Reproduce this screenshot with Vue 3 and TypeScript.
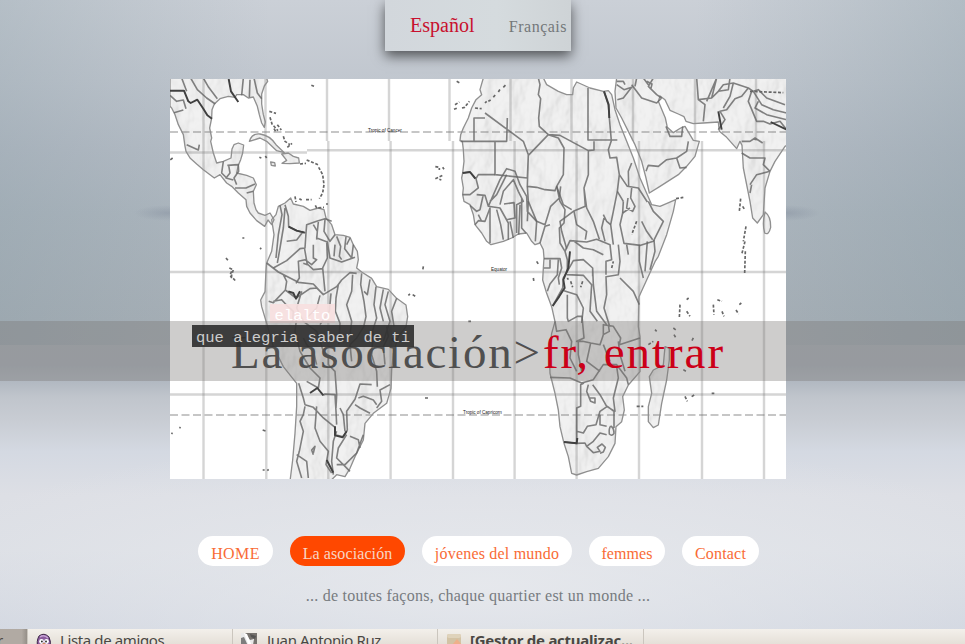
<script setup lang="ts">
interface MenuItem {
  label: string
  size: string
  active?: boolean
}

const menu: MenuItem[] = [
  { label: 'HOME', size: 'home' },
  { label: 'La asociación', size: 'asoc', active: true },
  { label: 'jóvenes del mundo', size: 'jov' },
  { label: 'femmes', size: 'fem' },
  { label: 'Contact', size: 'con' },
]

const north: number[] = [203.5, 265.5, 327, 389, 449.5, 510.5, 571.5, 633, 695, 756]
const south: number[] = [203.5, 266.3, 328.3, 390.6, 453, 514.6, 576.6, 639, 702, 764]

// Coastlines, drawn at three units per pixel, origin at the map's top left.
const land: string[] = [
  'M0 0L290 0L293 10L283 24L275 48L275 78L280 110L286 132L283 148L275 135L268 110L262 85L250 57L235 60L220 50L200 50L195 58L175 55L150 62L133 78L126 95L125 120L119 150L125 180L122 190L130 225L140 255L160 250L183 240L186 213L192 200L205 195L221 201L218 225L212 245L205 262L200 285L230 292L250 300L259 320L250 340L252 375L258 395L265 405L285 412L300 405L312 425L305 440L294 426L284 445L260 428L240 405L230 385L228 365L205 345L185 325L170 315L150 290L133 300L100 275L80 258L60 240L48 220L45 205L40 170L25 140L15 110L5 90L0 85Z',
  'M305 425L318 410L325 385L345 375L362 360L370 378L400 385L420 397L445 390L462 395L468 420L485 440L495 470L520 472L540 478L550 500L562 520L565 545L560 570L575 582L605 601L620 626L655 634L680 661L708 681L713 716L708 746L685 776L670 826L665 876L663 931L650 976L610 1006L585 1036L580 1086L555 1136L540 1171L525 1196L500 1190L480 1210L360 1210L368 1146L375 1066L380 986L380 916L340 866L310 806L290 736L275 686L272 666L285 641L288 576L290 555L305 520L312 470Z',
  'M940 0L930 35L935 50L918 65L905 90L895 120L880 150L872 170L870 188L877 190L880 215L882 250L878 285L875 300L880 330L878 350L882 370L900 380L910 410L915 440L935 465L950 490L963 500L1000 490L1025 480L1045 468L1070 465L1085 490L1095 500L1110 495L1120 515L1122 540L1120 571L1118 606L1130 646L1145 686L1155 731L1145 766L1138 816L1140 886L1155 946L1165 996L1170 1046L1182 1096L1195 1136L1205 1186L1220 1191L1250 1181L1285 1171L1315 1136L1335 1096L1338 1046L1355 1031L1363 996L1358 956L1375 921L1410 881L1410 776L1405 746L1407 656L1430 606L1455 551L1465 535L1490 470L1510 400L1517 365L1470 385L1445 380L1432 350L1410 300L1390 240L1370 190L1350 140L1335 95L1325 50L1315 38L1300 40L1260 30L1220 12L1210 30L1208 50L1190 50L1165 40L1130 20L1120 0Z',
  'M1340 0L1335 40L1338 90L1355 120L1375 160L1395 200L1415 250L1428 300L1438 345L1470 325L1525 290L1550 265L1575 235L1588 190L1570 187L1545 145L1532 150L1510 164L1492 148L1486 120L1465 70L1470 54L1485 65L1500 97L1525 108L1542 116L1548 130L1570 137L1600 135L1645 132L1648 160L1670 178L1700 212L1710 190L1716 202L1720 270L1740 370L1748 420L1762 435L1780 410L1785 330L1800 280L1815 250L1845 205L1855 200L1855 0Z',
  'M1485 806L1498 811L1498 846L1490 906L1475 976L1465 1041L1450 1049L1435 1031L1435 986L1445 946L1438 896L1450 876L1480 861Z',
  'M1785 402Q1803 415 1802 448Q1796 473 1784 465Q1776 438 1785 402Z',
  'M238 190Q246 165 270 168Q300 172 318 200L343 224L320 218L290 190L270 180Z',
  'M335 228L355 225L370 235L386 240L388 255L360 257L336 256L350 247Z',
  'M302 252L314 254L316 264L304 262Z',
]

const borders: string[] = [
  'M62 0L82 35L110 60L136 78M100 0L116 28L142 62M35 0L50 40M220 0L215 52M240 5L238 58M252 0L262 45L275 62M0 52L20 70L40 66L48 92M12 104L40 96M50 200L85 216L88 200M160 250L155 285L170 300M172 262L205 260L206 280L192 300L200 320M195 330L228 330L255 318M230 345L250 340M176 262L180 285L168 300L190 306',
  'M345 380L355 415L356 446L380 458L408 465M330 382L336 410L325 470L318 540M345 390L340 450L330 510L322 555M408 465L405 510L390 512L350 548L310 570M408 465L410 440L440 430L465 422L485 430M445 432L440 480L472 492L480 540L515 552L555 538M465 425L462 460L480 490L495 470M430 500L430 540L440 545L425 560L405 545L385 550L388 600L378 616M403 508L412 560L400 556M470 490L472 540L458 570L465 640M500 475L512 505L508 535L515 545M528 476L524 512L545 540L550 500M540 480L530 500M350 490L380 486L400 460M430 440L442 460L440 485M495 500L492 535M412 558L430 575L460 572',
  'M290 555L325 582L385 613L430 618L460 650L500 626L515 606L540 584L560 586M325 582L340 590L350 610L346 636L310 674L296 670M346 636L378 660L420 632L440 630L460 650M310 670L335 665L350 682L370 700L368 730M505 620L498 660L496 700L510 736L506 800M548 590L545 640L530 680L545 730L540 770M575 586L572 620L582 670L588 716L580 750M600 604L592 650L582 640M618 626L612 680L620 720L604 770M640 634L630 690L640 730M655 640L645 680L660 730L640 790M680 661L665 700L672 745M483 646L478 700L450 740M450 652L440 690L410 720M585 740L560 780L540 800L545 850M610 760L605 830L620 880L622 926M650 745L655 776L640 806L645 860M395 640L380 690L400 730L440 760L460 820L500 850',
  'M380 720L375 760L390 820L420 870L450 900L445 930L410 910M386 916L400 960L405 980L430 988L460 1020L495 1048L495 1070L520 1076L532 1056L530 1000L555 964L570 918L605 920M460 952L465 948L495 950L498 1000L500 1040M400 780L410 800L430 820L440 860M460 830L475 835L475 860L495 880L500 950L498 990M405 985L400 1010L390 1030L400 1060L388 1120L380 1150L395 1200M440 985L435 1050L450 1090L475 1120L468 1160L485 1185M500 1060L490 1090L485 1150L490 1190M530 1070L505 1110L500 1140L540 1180M500 1160L525 1160L560 1125L580 1070M565 960L580 955L610 966L620 980M555 980L570 990L600 1006M510 990L520 1010L525 1060M540 1075L565 1085L570 1110M430 1130L425 1116L435 1105L430 1125M660 920L630 936L635 970L620 990M380 1130L410 1150L415 1200',
  'M1012 120L1010 190L872 190M912 190L912 120L945 120M945 105L1060 190L1075 230L1072 300L975 290L975 190M1105 0L1110 20L1105 50L1112 62L1106 120L1108 145L1135 170L1075 232M1135 170L1170 172L1255 218L1272 216L1272 190M1254 30L1254 186L1342 186M1135 170L1165 180L1182 210L1180 290L1160 325L1155 338L1125 335L1100 328L1072 325L1075 232M1255 218L1255 290L1242 330L1246 385L1210 400L1170 430L1175 460L1190 512M1242 330L1250 390L1270 430L1288 484M1302 40L1315 80L1318 120L1324 188L1315 215L1320 240L1340 238L1348 290L1342 340L1330 400L1322 440L1330 500M1348 290L1372 325L1405 330L1432 372M1385 255L1375 280L1376 325M1360 370L1358 405L1350 440L1362 496L1412 502L1450 490L1480 430L1450 400L1435 370',
  'M1172 325L1168 360L1142 385L1125 440L1100 430L1075 370L1072 325M1160 325L1170 370L1185 395L1182 435L1168 450L1170 495L1185 520L1200 488L1250 492L1280 484L1320 500L1325 545L1308 550L1308 590M1212 400L1220 440L1250 460L1246 485M1210 488L1240 510L1270 515L1300 530M1185 520L1192 545L1192 580L1180 600L1178 630L1148 684M1122 542L1170 542L1175 570L1165 600L1168 620M1140 545L1140 570L1122 570M1165 545L1162 590L1140 618L1132 640M1192 580L1210 548L1240 545L1268 570L1268 595M1268 570L1270 620L1280 700L1310 740M1190 590L1240 592L1265 620L1260 700L1282 730M1182 638L1220 650L1240 690L1235 735M1345 500L1350 550L1345 590L1308 596L1310 650L1302 690L1318 742M1350 600L1390 640L1408 680M1408 500L1408 550L1420 600M1432 490L1425 580M1452 486L1455 520L1440 575M1370 500L1375 530',
  'M878 285L900 282L918 302L925 290L975 290M918 302L925 330L900 350L878 350M920 350L945 352L955 385L990 390L1015 435L1015 485M955 385L990 305L1010 272L1035 280L1050 320L1070 355L1072 400L1100 430L1096 490M990 380L1000 340L1030 305L1045 340L1060 370L1040 380L1040 465M900 382L920 400L930 395L940 350M915 440L925 428L945 430L960 390L960 495M980 395L992 440L1000 485M1002 378L1032 374L1035 420L1010 425M1055 360L1055 450L1068 465M1020 430L1030 480M1075 370L1072 430M1050 380L1046 470M960 370L980 350L1010 290M925 410L935 430M1110 495L1125 445L1140 440M1302 420L1295 450L1305 490M1322 440L1310 430L1300 410M1385 330L1382 360L1395 385L1388 400L1370 390L1374 360M1415 430L1430 460L1448 485M1358 405L1380 390M1342 340L1360 370M1160 325L1180 380L1205 395',
  'M1192 650L1192 720L1195 730L1222 715L1236 715L1242 780L1220 790L1238 790L1262 795L1290 800L1300 770L1300 740L1330 745L1352 780L1348 800L1410 780M1155 730L1160 760L1188 755L1205 790L1200 840L1220 880M1140 898L1200 900L1235 915L1270 905L1300 860L1340 860L1370 900L1375 920M1340 865L1345 900L1330 960L1335 1000L1310 985L1290 950L1268 920M1242 915L1232 920L1232 985L1220 990L1220 1096M1220 1060L1240 1065L1252 1045L1278 1040L1290 1000L1312 985L1332 1000L1332 1050M1220 1096L1182 1092M1220 1096L1245 1095L1250 1105L1270 1090L1290 1065L1310 1070M1250 1105L1270 1124L1290 1120L1282 1108L1296 1098L1306 1108L1300 1122L1290 1126M1255 920L1250 940L1262 970L1275 975L1275 960L1258 960M1290 1010L1290 1040L1310 1045M1300 770L1318 760L1315 740M1225 790L1225 830L1235 880M1262 795L1250 850L1290 880M1300 800L1320 850M1345 790L1350 830L1365 880M1322 1044Q1332 1050 1332 1066Q1326 1076 1318 1068Q1316 1052 1322 1044',
  'M1450 0L1435 25L1460 50L1475 60M1385 20L1415 60L1460 75L1475 60M1340 20L1362 35L1385 28L1360 60L1342 65M1365 20L1360 10L1340 10M1430 10L1446 18L1442 35M1420 0L1435 20M1400 0L1395 25M1488 145L1500 175L1535 175L1538 145M1555 190L1550 220L1520 240L1490 245L1465 265L1435 262L1428 280M1520 240L1530 270L1550 268M1580 0L1585 65L1605 80L1600 130M1585 65L1625 60L1645 40L1675 35L1680 0M1645 40L1660 20L1690 15L1735 30L1715 55L1695 62L1670 95L1650 100L1665 125L1645 155M1735 30L1750 40L1765 35L1790 60L1845 80M1745 40L1735 70L1760 130L1780 130L1800 138L1830 130L1850 155M1750 40L1775 80L1810 95L1850 105M1765 70L1755 90L1790 110L1850 125M1610 70L1640 0M1690 15L1680 55L1660 90M1640 0L1625 60M1715 225L1740 240L1785 240L1780 260L1800 280M1715 190L1740 190L1755 180L1778 195M1740 320L1760 290L1800 280M1740 345L1745 320',
]

const bold: string[] = [
  'M0 38L42 38L55 70L62 75L82 65L100 92L112 112L126 122M176 3L183 40L205 72M1148 684L1168 655L1184 630L1180 605L1195 570L1200 520',
  'M460 952L442 930L420 945M495 1045L495 1072L518 1078L530 1060M355 640L370 645L378 662L390 640',
  'M356 446L380 458L404 464M1645 100L1655 155M1802 132L1850 155M1182 1092L1220 1096L1222 1080',
  'M1302 40L1316 80L1318 120M470 1146L490 1184M878 285L900 282L916 302',
]

const islands: string[] = [
  'M298 100L318 106M300 118L306 138L324 158M322 140L334 156M340 175L345 190L360 200M352 208L366 196M312 152L318 162M390 258L408 256M410 246L430 254L444 260M446 268L458 290L462 320L458 345L448 362M375 355L378 372M388 362L395 366M408 365L425 365M436 382L440 390L462 388M468 378L474 378M268 238L274 240M286 234L290 240M424 22L432 25',
  'M796 266L808 268L808 276M818 268L822 274M796 302L818 292M808 304L814 306M860 10L872 16M855 80L868 72M852 94L862 90M876 90L884 88L898 70M915 90L935 92M168 540L176 550M178 570L190 575L184 595L196 608M185 580L180 590L186 602M760 565L758 578M217 480L223 480M270 510L274 513M715 652L720 648M728 650L736 655M895 730L903 730',
  'M945 75L950 70M955 70L962 66M970 58L976 50M985 42L990 34M1000 28L1008 20M1518 362L1540 358M1712 362L1708 400M1718 385L1724 395M1728 445L1720 490M1725 490L1715 530M1726 520L1724 585M1642 665L1656 670M1630 680L1632 710M1656 700L1662 715M1708 680L1714 675M1698 696L1706 708M1455 755L1460 760M1435 800L1450 790M1510 750L1518 756M1512 770L1518 780M1540 875L1548 880M1570 780L1565 790M1545 955L1552 970M1565 956L1574 950M1625 946L1633 946M1550 665L1556 660M1530 680L1528 720M1550 700L1560 715M1195 605L1192 600M1202 610L1208 628M1238 610L1232 628M1400 985L1420 985M1090 600L1092 612M1100 550L1106 560M765 960L775 960M4 1065L8 1067M28 1048L32 1050M278 1056L290 1060M278 1176L284 1176M292 1178L296 1174M8 240L0 246M1740 40L1840 44M1400 430L1385 470M1325 570L1330 550',
]
</script>

<template>
  <main class="page">
    <nav class="langs">
      <a class="lang current">Español</a>
      <a class="lang other">Français</a>
    </nav>

    <section class="stage">
      <svg class="map" viewBox="0 0 616 400" width="616" height="400">
        <defs>
          <filter id="relief" x="0" y="0" width="100%" height="100%">
            <feTurbulence type="fractalNoise" baseFrequency="0.012 0.008" numOctaves="4" seed="7" result="n" />
            <feDiffuseLighting in="n" surfaceScale="26" lighting-color="#ffffff" result="l">
              <feDistantLight azimuth="200" elevation="64" />
            </feDiffuseLighting>
            <feComposite in="l" in2="SourceAlpha" operator="in" result="lit" />
            <feMerge>
              <feMergeNode in="lit" />
              <feMergeNode in="SourceGraphic" />
            </feMerge>
          </filter>
        </defs>
        <rect width="616" height="400" fill="#fff" />
        <g transform="translate(0 -1) scale(.33333)">
          <g filter="url(#relief)">
            <path v-for="(d, i) in land" :key="'f' + i" :d="d" fill="#ececec" fill-opacity=".74" />
          </g>
        </g>
        <g transform="translate(-170 -79)" fill="none" stroke="#777" stroke-opacity=".31" stroke-width="2.4">
          <path v-for="x in north" :key="'n' + x" :d="`M${x} 79V141`" />
          <path v-for="x in south" :key="'s' + x" :d="`M${x} 141V479`" />
          <path d="M170 152.5H307M307 150.3H786M170 272H786M170 394.5H786" />
          <path d="M170 132H786M170 415H786" stroke-dasharray="8 3.5" stroke-width="2" stroke-opacity=".42" />
        </g>
        <g class="lines" transform="translate(0 -1) scale(.33333)" fill="none" stroke-linejoin="round">
          <path v-for="(d, i) in land" :key="'c' + i" :d="d" stroke="#909090" stroke-width="4" />
          <path v-for="(d, i) in borders" :key="'b' + i" :d="d" stroke="#666" stroke-opacity=".82" stroke-width="4.8" />
          <path v-for="(d, i) in bold" :key="'k' + i" :d="d" stroke="#404040" stroke-width="5.8" />
          <path v-for="(d, i) in islands" :key="'i' + i" :d="d" stroke="#666" stroke-width="5" stroke-dasharray="9 5" />
        </g>
        <g class="geo">
          <text x="198" y="53">Tropic of Cancer</text>
          <text x="321" y="192">Equator</text>
          <text x="293" y="335">Tropic of Capricorn</text>
        </g>
      </svg>
      <span class="place">elalto</span>
    </section>

    <h1 class="band"><span class="title">La asociación&gt;</span><span class="enter">fr, entrar</span></h1>
    <span class="tip">que alegria saber de ti</span>

    <nav class="menu">
      <a v-for="m in menu" :key="m.label" class="pill" :class="[m.size, { active: m.active }]"><span>{{ m.label }}</span></a>
    </nav>
    <p class="motto">... de toutes façons, chaque quartier est un monde ...</p>

    <footer class="taskbar">
      <div class="task first"><span>r</span></div>
      <div class="task">
        <svg width="16" height="16" viewBox="0 0 16 16">
          <path d="M2 16Q0 8 3 3Q8-1 13 4Q16 9 13 16Z" fill="#8a5b9d" stroke="#3e2748" />
          <path d="M4 4Q8 1 12 5" fill="none" stroke="#c9a5d8" stroke-width="1.4" />
          <circle cx="5.5" cy="8.5" r="2.4" fill="#fff" /><circle cx="10.5" cy="8.5" r="2.4" fill="#fff" />
          <circle cx="5.9" cy="8.5" r=".9" fill="#222" /><circle cx="10" cy="8.5" r=".9" fill="#222" />
          <path d="M5.5 11.5L8 10L10.5 11.5L8 14Z" fill="#f0a13a" />
        </svg>
        <span class="t1">Lista de amigos</span>
      </div>
      <div class="task">
        <svg width="16" height="16" viewBox="0 0 16 16">
          <rect width="16" height="16" fill="#e9e9e9" />
          <path d="M4 0H16V14L12 12L13 6L9 7Z" fill="#77736f" />
          <path d="M9 1L15 3L14 6L10 4ZM0 5L3 4L7 13L4 16L0 12Z" fill="#444" fill-opacity=".65" />
          <path d="M3 0L6 1L11 13L9 16Z" fill="#fff" />
        </svg>
        <span class="t2">Juan Antonio Ruz</span>
      </div>
      <div class="task last">
        <svg width="16" height="16" viewBox="0 0 16 16">
          <rect x="1" y="1" width="14" height="15" rx="2" fill="#d3c3a5" />
          <rect x="1" y="1" width="14" height="4" rx="2" fill="#dfd3bb" />
          <path d="M6 12L11 6L16 12V16H6Z" fill="#eeb08a" />
        </svg>
        <span class="t3">[Gestor de actualizac...</span>
      </div>
    </footer>
  </main>
</template>

<style>
body {
  margin: 0;
  overflow: hidden;
}
</style>

<style scoped>
.page {
  position: relative;
  box-sizing: border-box;
  width: 965px;
  height: 644px;
  overflow: hidden;
  display: flex;
  flex-direction: column;
  align-items: center;
  font-family: "Liberation Serif", serif;
  background:
    radial-gradient(ellipse 34px 8px at 168px 213px, rgba(125, 135, 152, 0.4), rgba(125, 135, 152, 0)),
    radial-gradient(ellipse 34px 8px at 786px 213px, rgba(125, 135, 152, 0.4), rgba(125, 135, 152, 0)),
    radial-gradient(ellipse 600px 150px at 50% 91%, rgba(232, 234, 238, 0.85), rgba(228, 231, 236, 0) 100%),
    linear-gradient(90deg, rgba(130, 150, 160, 0.3), rgba(130, 150, 160, 0) 28%, rgba(130, 150, 160, 0) 72%, rgba(130, 150, 160, 0.34)) 0 0 / 100% 345px no-repeat,
    linear-gradient(180deg, #cbd0d7 0, #c1c7cf 80px, #b6bdc6 150px, #aeb7bf 213px, #a8b0b7 320px, #a8afb8 365px, #b1b8c1 381px, #c0c5cc 397px, #c9cdd4 422px, #d4d9e2 452px, #dddfe5 495px, #dcdfe5 550px, #d1d6e0 635px);
}
.langs {
  box-sizing: border-box;
  width: 186px;
  height: 51px;
  flex: none;
  margin-right: 9px;
  padding: 0 4px 0 25px;
  display: flex;
  justify-content: space-between;
  align-items: baseline;
  line-height: 50px;
  background: linear-gradient(90deg, #d2d7dc, #d5dbde 60%, #ced3d6);
  box-shadow: 0 5px 12px rgba(0, 0, 0, 0.6);
}
.lang {
  white-space: nowrap;
}
.current {
  font-size: 20px;
  color: #c8102e;
}
.other {
  font-size: 16px;
  letter-spacing: 0.5px;
  color: #74787a;
}
.stage {
  position: relative;
  flex: none;
  width: 616px;
  height: 400px;
  margin: 28px 9px 0 0;
}
.map {
  display: block;
}
.lines {
  filter: blur(1px);
}
.geo {
  font: 4.6px "Liberation Sans", sans-serif;
  fill: #222;
}
.place {
  position: absolute;
  left: 100px;
  top: 225px;
  width: 65px;
  height: 19px;
  line-height: 24px;
  text-align: center;
  font-family: "Liberation Mono", monospace;
  font-size: 15.5px;
  color: #fff;
  background: rgba(247, 224, 224, 0.92);
}
.band {
  position: absolute;
  left: 0;
  top: 321px;
  box-sizing: border-box;
  width: 965px;
  height: 60px;
  margin: 0;
  padding-left: 231px;
  display: flex;
  gap: 3px;
  white-space: nowrap;
  line-height: 63px;
  font-size: 47px;
  font-weight: 400;
  background: rgba(121, 120, 118, 0.37);
}
.title {
  width: 309px;
  color: #505050;
  letter-spacing: 1.75px;
}
.enter {
  color: #cc0018;
  letter-spacing: 1.95px;
}
.tip {
  position: absolute;
  left: 192px;
  top: 325px;
  box-sizing: border-box;
  width: 222px;
  height: 22px;
  padding-left: 4px;
  line-height: 26px;
  white-space: nowrap;
  font-family: "Liberation Mono", monospace;
  font-size: 15.5px;
  color: #ccc;
  background: rgba(46, 46, 46, 0.9);
}
.menu {
  display: flex;
  gap: 17px;
  margin: 57px 8px 0 0;
}
.pill {
  display: flex;
  justify-content: center;
  height: 30px;
  line-height: 35px;
  border-radius: 15px;
  background: #fff;
  color: #f96b35;
  font-size: 16px;
  white-space: nowrap;
}
.active {
  background: #ff4800;
  color: #f8d5c5;
}
.home { width: 75px; letter-spacing: 0.4px; }
.asoc { width: 115px; letter-spacing: 0.1px; }
.jov { width: 150px; letter-spacing: 0.2px; }
.fem { width: 76px; letter-spacing: 0.1px; }
.con { width: 77px; letter-spacing: 0.2px; }
.motto {
  margin: 20px 9px 0 0;
  line-height: 20px;
  font-size: 16px;
  letter-spacing: 0.24px;
  color: #777b80;
  white-space: nowrap;
}
.taskbar {
  width: 965px;
  height: 15px;
  margin-top: auto;
  display: flex;
  overflow: hidden;
  background: linear-gradient(#f3f0eb, #e5e0d8);
  font-family: "Noto Sans", sans-serif;
  font-size: 15px;
  line-height: 23px;
  letter-spacing: -0.38px;
  color: #4a4743;
}
.task {
  box-sizing: border-box;
  width: 205px;
  flex: none;
  padding: 0 0 0 8px;
  display: flex;
  gap: 8px;
  border-right: 1px solid #cbc6be;
  white-space: nowrap;
}
.last {
  width: 206px;
}
.task svg {
  flex: none;
  margin-top: 4px;
}
.first {
  width: 28px;
  padding: 0;
  background: linear-gradient(90deg, #b1aaa3 80%, #958f88);
}
.first span {
  margin-left: -3px;
}
.t2 {
  padding-left: 2px;
}
.t3 {
  font-weight: 700;
  letter-spacing: -0.25px;
}
</style>
